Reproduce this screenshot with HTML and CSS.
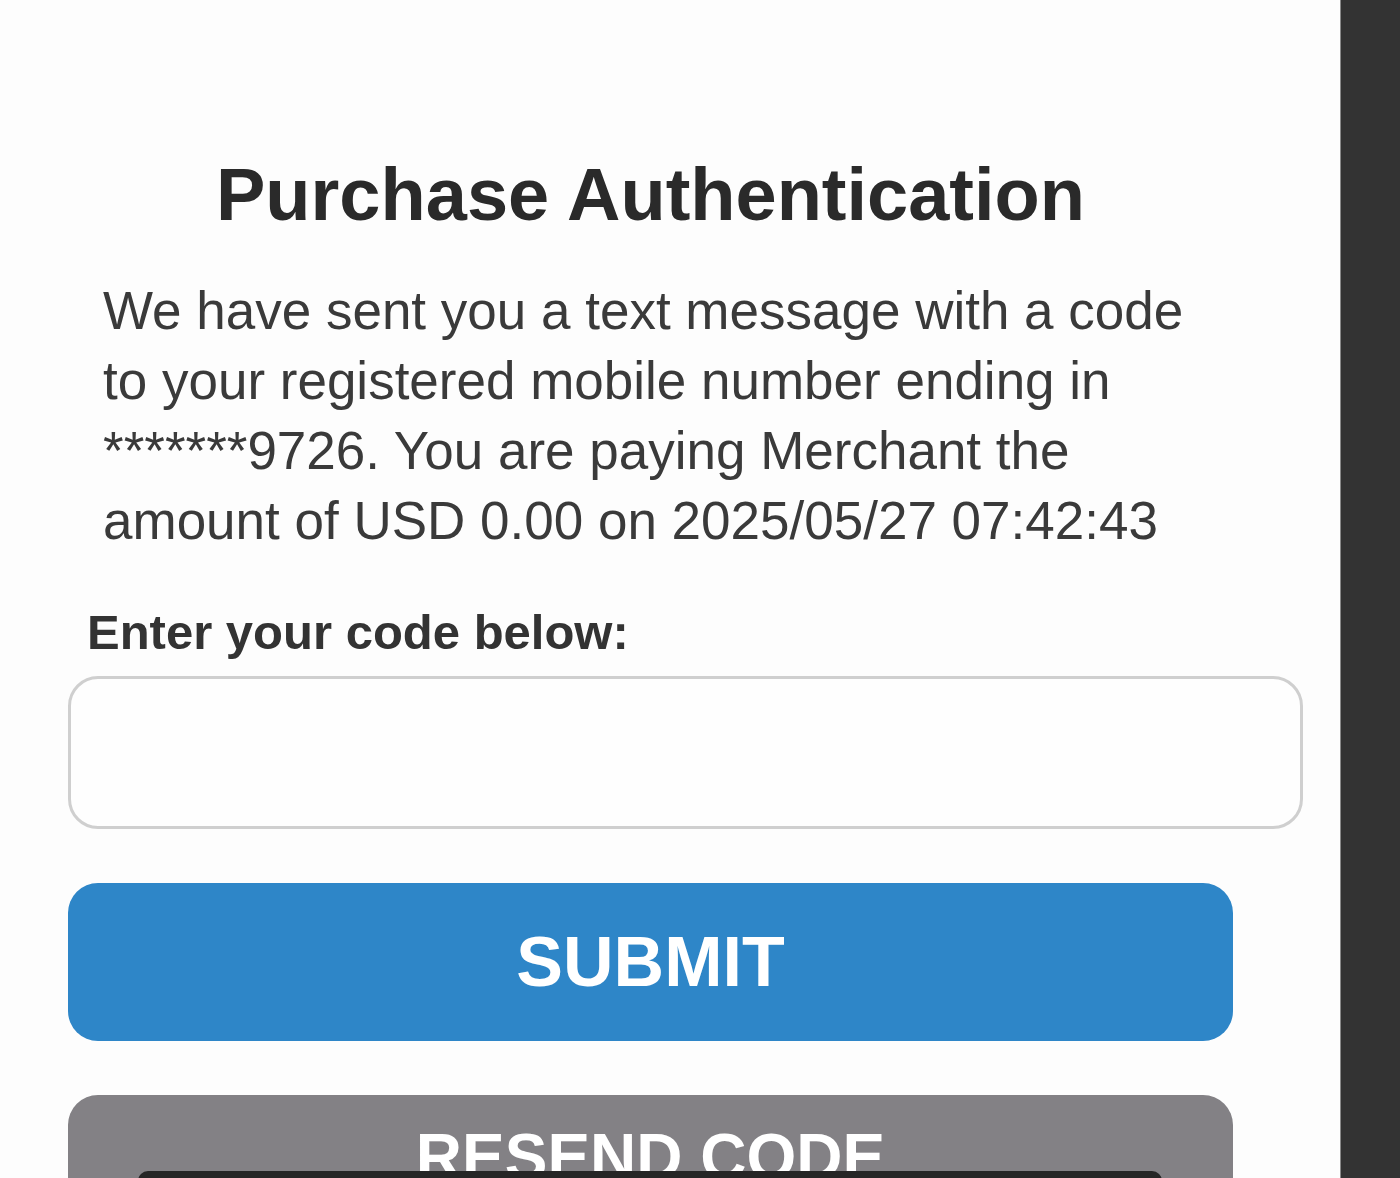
FILE: index.html
```html
<!DOCTYPE html>
<html lang="en">
<head>
<meta charset="utf-8">
<title>Purchase Authentication</title>
<link rel="stylesheet" href="styles.css">
</head>
<body>
<div class="screen">
  <main class="page">
    <div class="content">
      <h1 class="title">Purchase Authentication</h1>
      <p class="message">We have sent you a text message with a code to your registered mobile number ending in *******9726. You are paying Merchant the amount of USD 0.00 on 2025/05/27 07:42:43</p>
      <label class="label" for="code">Enter your code below:</label>
      <input class="code-input" id="code" type="text">
      <button class="btn btn-submit" type="button">SUBMIT</button>
      <button class="btn btn-resend" type="button">RESEND CODE</button>
    </div>
    <div class="toolbar"></div>
  </main>
  <aside class="side"></aside>
</div>
</body>
</html>
```
FILE: styles.css
```css
* { box-sizing: border-box; }
html, body {
  margin: 0;
  padding: 0;
  height: 1178px;
  overflow: hidden;
  background: #fdfdfd;
}
body {
  font-family: "Liberation Sans", Arial, Helvetica, sans-serif;
  color: #333;
}
.screen {
  display: flex;
  height: 1178px;
}
.page {
  position: relative;
  flex: 0 0 1340px;
  background: #fdfdfd;
  overflow: hidden;
}
.side {
  flex: 1;
  background: #333333;
  border-left: 1px solid #8a8a8a;
}
.content {
  display: flex;
  flex-direction: column;
  align-items: flex-start;
  padding: 152px 0 0 68px;
}
.title {
  margin: 0;
  width: 1165px;
  text-align: center;
  font-size: 74px;
  line-height: 85px;
  font-weight: 700;
  color: #2a2a2a;
}
.message {
  margin: 39px 0 0;
  width: 1165px;
  padding: 0 35px;
  font-size: 53px;
  line-height: 70px;
  color: #3a3a3a;
}
.label {
  margin-top: 48px;
  padding-left: 19px;
  font-size: 49px;
  line-height: 56px;
  font-weight: 700;
  color: #333;
}
.code-input {
  margin-top: 16px;
  width: 1235px;
  height: 153px;
  border: 3px solid #cfcfcf;
  border-radius: 30px;
  background: #fefefe;
  font-family: inherit;
  font-size: 50px;
  padding: 0 30px;
  outline: none;
}
.btn {
  width: 1165px;
  height: 158px;
  border: none;
  border-radius: 30px;
  color: #ffffff;
  font-family: inherit;
  font-weight: 700;
  display: flex;
  justify-content: center;
  padding: 0;
}
.btn-submit {
  margin-top: 54px;
  background: #2e86c8;
  font-size: 70px;
  align-items: center;
  line-height: 1;
}
.btn-resend {
  margin-top: 54px;
  background: #838185;
  font-size: 64px;
  line-height: 1;
  align-items: flex-start;
  padding-top: 30px;
}
.toolbar {
  position: absolute;
  left: 138px;
  top: 1171px;
  width: 1024px;
  height: 40px;
  background: #262626;
  border-radius: 10px 10px 0 0;
}
```
